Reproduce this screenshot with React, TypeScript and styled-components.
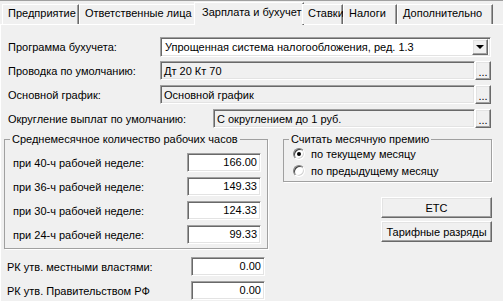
import React from 'react';
import styled, { createGlobalStyle, css } from 'styled-components';

const Global = createGlobalStyle`
  html, body { margin: 0; padding: 0; background: #f0f0f0; }
  body {
    font-family: "Liberation Sans", Arial, sans-serif;
    font-size: 11px;
    color: #000;
  }
  * { box-sizing: border-box; }
`;

const sunken = css`
  border: 1px solid;
  border-color: #a0a0a0 #ffffff #ffffff #a0a0a0;
  box-shadow: inset 1px 1px 0 #696969, inset -1px -1px 0 #e3e3e3;
`;

const raised = css`
  border: 1px solid;
  border-color: #ffffff #696969 #696969 #ffffff;
  box-shadow: inset -1px -1px 0 #a0a0a0, inset 1px 1px 0 #e3e3e3;
  background: #f0f0f0;
`;

const Window = styled.div`
  width: 503px;
  height: 301px;
  overflow: hidden;
  background: #f0f0f0;
  display: flex;
  flex-direction: column;
  border-top: 1px solid #a0a0a0;
`;

const TabStrip = styled.div`
  display: flex;
  align-items: flex-end;
  height: 23px;
  padding-left: 2px;
  position: relative;
  z-index: 1;
`;

const Tab = styled.div<{ $w: number; $active?: boolean }>`
  width: ${(p) => p.$w}px;
  height: 20px;
  padding-left: 5px;
  line-height: 17px;
  white-space: nowrap;
  border-top: 1px solid #fff;
  border-left: 1px solid #fff;
  border-right: 1px solid #696969;
  box-shadow: inset -1px 0 0 #a0a0a0;
  background: #f0f0f0;
  ${(p) =>
    p.$active &&
    css`
      height: 23px;
      margin: 0 -2px -1px -2px;
      padding-left: 7px;
      line-height: 19px;
    `}
`;

const Panel = styled.div`
  flex: 1;
  border-top: 1px solid #fff;
  border-left: 1px solid #fff;
  display: flex;
  flex-direction: column;
`;

const Form = styled.div`
  display: flex;
  flex-direction: column;
  gap: 5px;
  padding: 12px 12px 0 7px;
`;

const Row = styled.div`
  display: flex;
  align-items: center;
  height: 19px;
`;

const Label = styled.div<{ $w: number }>`
  width: ${(p) => p.$w}px;
  flex: none;
  white-space: nowrap;
`;

const Combo = styled.div`
  ${sunken};
  flex: 1;
  height: 20px;
  background: #fff;
  display: flex;
  align-items: center;
  padding: 0 2px 0 4px;
`;

const ComboText = styled.span`
  flex: 1;
  white-space: nowrap;
`;

const DropButton = styled.div`
  ${raised};
  width: 16px;
  height: 16px;
  display: flex;
  align-items: center;
  justify-content: center;
`;

const Arrow = styled.span`
  width: 0;
  height: 0;
  border-left: 4px solid transparent;
  border-right: 4px solid transparent;
  border-top: 4px solid #000;
`;

const Field = styled.div`
  ${sunken};
  flex: 1;
  height: 19px;
  background: #f0f0f0;
  display: flex;
  align-items: center;
  padding-left: 3px;
  white-space: nowrap;
`;

const DotsButton = styled.div`
  ${raised};
  width: 16px;
  height: 19px;
  flex: none;
  display: flex;
  align-items: flex-end;
  justify-content: center;
  font-size: 11px;
  line-height: 12px;
  padding-bottom: 1px;
`;

const Lower = styled.div`
  display: flex;
  gap: 15px;
  padding: 4px 0 0 3px;
`;

const LeftCol = styled.div`
  display: flex;
  flex-direction: column;
  width: 264px;
`;

const RightCol = styled.div`
  display: flex;
  flex-direction: column;
  align-items: flex-end;
  width: 209px;
`;

const Group = styled.fieldset<{ $w: number; $pb: number }>`
  margin: 0;
  width: ${(p) => p.$w}px;
  border: 1px solid #a0a0a0;
  box-shadow: 1px 1px 0 #fff;
  padding: 0 6px ${(p) => p.$pb}px 5px;
  display: flex;
  flex-direction: column;
`;

const Legend = styled.legend`
  padding: 0 2px;
  line-height: 14px;
`;

const GroupRows = styled.div`
  display: flex;
  flex-direction: column;
  gap: 5px;
  padding: 7px 0 0 3px;
`;

const NumRow = styled.div`
  display: flex;
  align-items: center;
  justify-content: space-between;
  height: 19px;
`;

const NumInput = styled.div`
  ${sunken};
  width: 74px;
  height: 19px;
  background: #fff;
  text-align: right;
  padding-right: 3px;
  line-height: 17px;
`;

const BottomRows = styled.div`
  display: flex;
  flex-direction: column;
  gap: 5px;
  padding: 8px 0 0 3px;
  width: 261px;
`;

const RadioList = styled.div`
  display: flex;
  flex-direction: column;
  gap: 3px;
  padding: 1px 0 0 4px;
`;

const RadioRow = styled.label`
  display: flex;
  align-items: center;
  gap: 6px;
  height: 14px;
`;

const RadioCircle = styled.span<{ $on?: boolean }>`
  width: 12px;
  height: 12px;
  border-radius: 50%;
  border: 1px solid;
  border-color: #808080 #ffffff #ffffff #808080;
  box-shadow: inset 1px 1px 0 #404040, inset -1px -1px 0 #d4d4d4;
  background: #fff;
  display: flex;
  align-items: center;
  justify-content: center;
  &::after {
    content: '';
    width: 4px;
    height: 4px;
    border-radius: 50%;
    background: ${(p) => (p.$on ? '#000' : 'transparent')};
  }
`;

const Buttons = styled.div`
  display: flex;
  flex-direction: column;
  gap: 3px;
  padding: 15px 0 0;
`;

const PushButton = styled.div`
  ${raised};
  width: 111px;
  height: 21px;
  display: flex;
  align-items: center;
  justify-content: center;
  white-space: nowrap;
`;

const tabs: { t: string; w: number; active?: boolean }[] = [
  { t: 'Предприятие', w: 77 },
  { t: 'Ответственные лица', w: 117 },
  { t: 'Зарплата и бухучет', w: 110, active: true },
  { t: 'Ставки', w: 41 },
  { t: 'Налоги', w: 54 },
  { t: 'Дополнительно', w: 96 },
];

const hours = [
  { l: 'при 40-ч рабочей неделе:', v: '166.00' },
  { l: 'при 36-ч рабочей неделе:', v: '149.33' },
  { l: 'при 30-ч рабочей неделе:', v: '124.33' },
  { l: 'при 24-ч рабочей неделе:', v: '99.33' },
];

export default function App() {
  return (
    <>
      <Global />
      <Window>
        <TabStrip>
          {tabs.map((t) => (
            <Tab key={t.t} $w={t.w} $active={t.active}>
              {t.t}
            </Tab>
          ))}
        </TabStrip>
        <Panel>
          <Form>
            <Row>
              <Label $w={152}>Программа бухучета:</Label>
              <Combo>
                <ComboText>Упрощенная система налогообложения, ред. 1.3</ComboText>
                <DropButton>
                  <Arrow />
                </DropButton>
              </Combo>
            </Row>
            <Row>
              <Label $w={152}>Проводка по умолчанию:</Label>
              <Field>Дт 20 Кт 70</Field>
              <DotsButton>...</DotsButton>
            </Row>
            <Row>
              <Label $w={152}>Основной график:</Label>
              <Field>Основной график</Field>
              <DotsButton>...</DotsButton>
            </Row>
            <Row>
              <Label $w={205}>Округление выплат по умолчанию:</Label>
              <Field>С округлением до 1 руб.</Field>
              <DotsButton>...</DotsButton>
            </Row>
          </Form>
          <Lower>
            <LeftCol>
              <Group $w={264} $pb={4}>
                <Legend>Среднемесячное количество рабочих часов</Legend>
                <GroupRows>
                  {hours.map((h) => (
                    <NumRow key={h.l}>
                      <span>{h.l}</span>
                      <NumInput>{h.v}</NumInput>
                    </NumRow>
                  ))}
                </GroupRows>
              </Group>
              <BottomRows>
                <NumRow>
                  <span>РК утв. местными властями:</span>
                  <NumInput>0.00</NumInput>
                </NumRow>
                <NumRow>
                  <span>РК утв. Правительством РФ</span>
                  <NumInput>0.00</NumInput>
                </NumRow>
              </BottomRows>
            </LeftCol>
            <RightCol>
              <Group $w={209} $pb={3}>
                <Legend>Считать месячную премию</Legend>
                <RadioList>
                  <RadioRow>
                    <RadioCircle $on />
                    по текущему месяцу
                  </RadioRow>
                  <RadioRow>
                    <RadioCircle />
                    по предыдущему месяцу
                  </RadioRow>
                </RadioList>
              </Group>
              <Buttons>
                <PushButton>ЕТС</PushButton>
                <PushButton>Тарифные разряды</PushButton>
              </Buttons>
            </RightCol>
          </Lower>
        </Panel>
      </Window>
    </>
  );
}
